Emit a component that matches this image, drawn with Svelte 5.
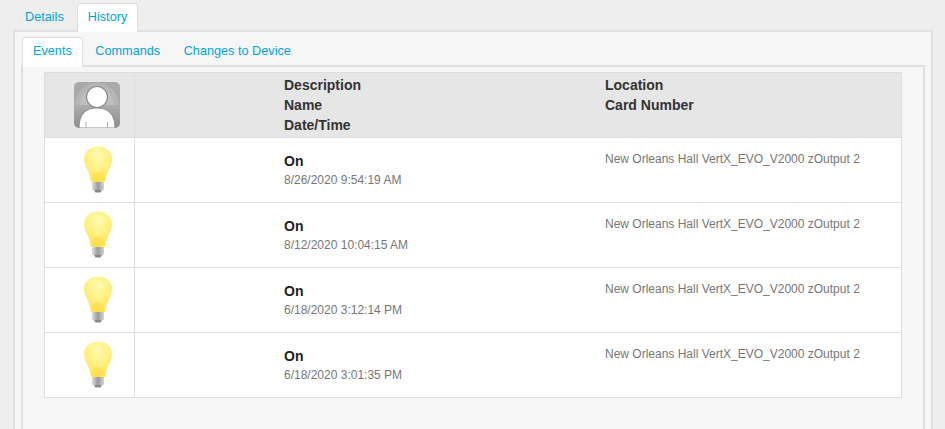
<script>
	const events = [
		{ name: 'On', time: '8/26/2020 9:54:19 AM' },
		{ name: 'On', time: '8/12/2020 10:04:15 AM' },
		{ name: 'On', time: '6/18/2020 3:12:14 PM' },
		{ name: 'On', time: '6/18/2020 3:01:35 PM' }
	];
	const location = 'New Orleans Hall VertX_EVO_V2000 zOutput 2';
</script>

<div class="page">
	<div class="tabs">
		<span class="tab">Details</span>
		<span class="tab active">History</span>
	</div>
	<div class="panel outer">
		<div class="tabs">
			<span class="tab active">Events</span>
			<span class="tab">Commands</span>
			<span class="tab">Changes to Device</span>
		</div>
		<div class="panel inner">
			<table>
				<thead>
					<tr>
						<th class="icon-cell">
							<svg width="46" height="46" viewBox="0 0 46 46">
								<defs>
									<clipPath id="av-clip"><rect width="46" height="46" rx="5" /></clipPath>
									<linearGradient id="av-low" x1="0" x2="0" y1="0" y2="1">
										<stop offset="0" stop-color="#adadad" />
										<stop offset="1" stop-color="#8d8d8d" />
									</linearGradient>
								</defs>
								<g clip-path="url(#av-clip)">
									<rect width="46" height="23" fill="#a9a9a9" />
									<path d="M1 23a22 22 0 0 1 44 0z" fill="#b5b5b5" />
									<path d="M6 23a17 17 0 0 1 34 0z" fill="#bfbfbf" />
									<rect y="23" width="46" height="23" fill="url(#av-low)" />
									<path d="M5 46 C5 32 12 26 23 26 C34 26 41 32 41 46 Z" fill="#fff" stroke="#8f8f8f" stroke-width="1" />
									<circle cx="23" cy="15" r="10.500" fill="#fff" stroke="#8c8c8c" stroke-width="1.200" />
									<path d="M12 40v6M33.500 40v6" stroke="#adadad" stroke-width="1" />
								</g>
							</svg>
						</th>
						<th class="gap"></th>
						<th class="desc">Description<br />Name<br />Date/Time</th>
						<th class="loc">Location<br />Card Number</th>
					</tr>
				</thead>
				<tbody>
					{#each events as ev, i}
						<tr>
							<td class="icon-cell">
								<svg class="bulb" width="30" height="48" viewBox="0 0 30 48">
									<defs>
										<radialGradient id="glass{i}" cx="50%" cy="25%" r="70%">
											<stop offset="0" stop-color="#fffab0" />
											<stop offset="0.6" stop-color="#fff080" />
											<stop offset="1" stop-color="#ffe35c" />
										</radialGradient>
										<linearGradient id="base{i}" x1="0" x2="1" y1="0" y2="0">
											<stop offset="0" stop-color="#dcdcdc" />
											<stop offset="0.5" stop-color="#9a9a9a" />
											<stop offset="1" stop-color="#d4d4d4" />
										</linearGradient>
									</defs>
									<path d="M15 0.500 C23 0.500 29 5.500 29 13 C29 21 23.500 24 22 36 L8 36 C6.500 24 1 21 1 13 C1 5.500 7 0.500 15 0.500 Z" fill="url(#glass{i})" />
									<ellipse cx="15" cy="31" rx="6" ry="5" fill="#fbd93f" opacity="0.45" />
									<rect x="9" y="36" width="12" height="8" rx="1" fill="url(#base{i})" />
									<path d="M11 44h8l-1.500 2.500h-5z" fill="#888" />
								</svg>
							</td>
							<td class="gap"></td>
							<td class="desc">
								<div class="name">{ev.name}</div>
								<div class="time">{ev.time}</div>
							</td>
							<td class="loc">{location}</td>
						</tr>
					{/each}
				</tbody>
			</table>
		</div>
	</div>
</div>

<style>
	:global(body) {
		background: #eeeeee;
		font-family: 'Liberation Sans', Arial, sans-serif;
	}
	.page {
		height: 429px;
		overflow: hidden;
		padding: 3px 12px 0 13px;
		box-sizing: border-box;
	}
	.tabs {
		display: flex;
		gap: 2px;
		height: 27px;
		padding-left: 1px;
		position: relative;
		z-index: 1;
	}
	.tab {
		box-sizing: border-box;
		height: 29px;
		line-height: 26px;
		padding: 0 10px;
		font-size: 12.7px;
		color: #00a5d6;
		border: 1px solid transparent;
		border-bottom: 0;
		border-radius: 4px 4px 0 0;
		white-space: nowrap;
	}
	.active {
		background: #fff;
		border-color: #dedede;
	}
	.panel {
		box-sizing: border-box;
		background: #f6f6f6;
		border: 2px solid #e0e0e0;
		border-bottom: 0;
	}
	.outer {
		width: 920px;
		height: 420px;
		padding: 5px 6px 0;
	}
	.outer .tabs {
		height: 28px;
		gap: 1.5px;
	}
	.outer .tab {
		height: 30px;
	}
	.inner {
		height: 400px;
		padding: 5px 21px 0;
	}
	table {
		width: 858px;
		border-collapse: collapse;
		table-layout: fixed;
		background: #fff;
		border: 1px solid #dedede;
		color: #333;
	}
	thead tr {
		height: 65px;
		background: #e6e6e6;
		border-bottom: 1px solid #dedede;
	}
	tbody tr {
		height: 65px;
		border-bottom: 1px solid #dedede;
	}
	th, td {
		padding: 0;
		vertical-align: top;
		text-align: left;
	}
	.icon-cell {
		width: 90px;
		box-sizing: border-box;
		padding-left: 15px;
		text-align: center;
		border-right: 1px solid #dedede;
		line-height: 0;
	}
	th.icon-cell {
		padding-top: 9px;
	}
	td.icon-cell {
		padding-top: 8px;
		padding-left: 17px;
	}
	.gap {
		width: 149px;
	}
	.desc {
		width: 321px;
	}
	th.desc, th.loc {
		font-size: 14px;
		font-weight: bold;
		line-height: 20px;
		padding-top: 2px;
		color: #333;
	}
	td.desc {
		padding-top: 14px;
	}
	.name {
		font-size: 14px;
		font-weight: bold;
		line-height: 19px;
		color: #222;
	}
	.time {
		font-size: 12px;
		line-height: 19px;
		color: #777;
	}
	td.loc {
		font-size: 12px;
		line-height: 16px;
		padding-top: 13px;
		color: #777;
	}
	.bulb {
		filter: blur(0.5px);
	}
</style>
